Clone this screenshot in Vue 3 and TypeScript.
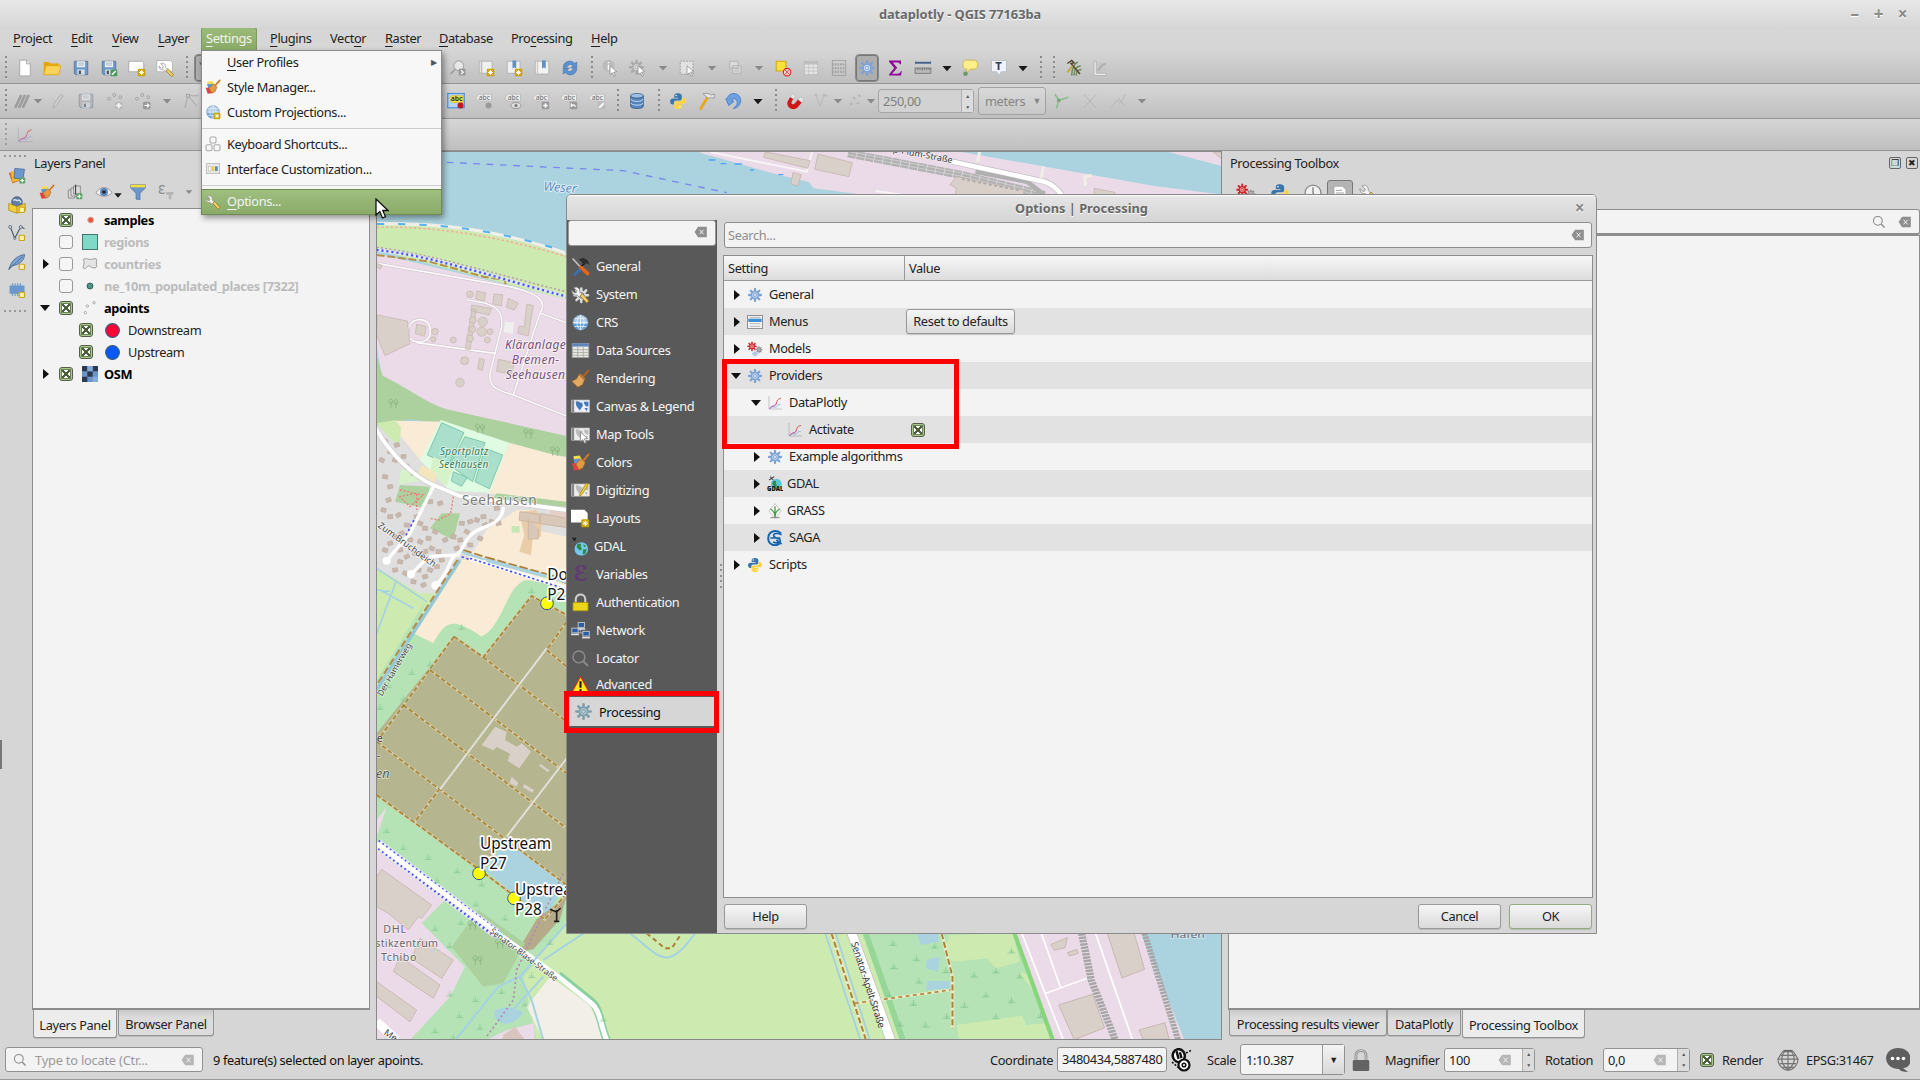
<script setup lang="ts">
interface Tool { k: string; x: number; w?: number }

const gear = (c: string, hole: string, cx = 12, cy = 12, s = 1) =>
  `<g transform="translate(${cx} ${cy}) scale(${s})"><g stroke="${c}" stroke-width="3.4" stroke-linecap="round"><path d="M0-9V9M-9 0H9M-6.4-6.4 6.4 6.4M6.4-6.4-6.4 6.4"/></g><circle r="6.2" fill="${c}"/><circle r="3.6" fill="none" stroke="${hole}" stroke-width="1.2"/><circle r="1.6" fill="${hole}"/></g>`
const star = '<rect x="13" y="13" width="10" height="10" rx="1.5" fill="#c8a000"/><path d="M18 14.5v7M14.6 18h6.8M15.6 15.6l4.8 4.8M20.4 15.6l-4.8 4.8" stroke="#fff" stroke-width="1.2"/>'
const ybox = '<rect x="15" y="15" width="7" height="7" rx="1" fill="#fcf3a8" stroke="#cfa41c" stroke-width="1.6"/>'
const wrench = '<path d="M3.500 3.500l4 3.500-.5 2.500-2.500.5L1 7c0 4 3 6.500 6.500 5.500l3 3 3.500-3.500-3-3C12 5 8 1 3.500 3.500z" fill="#f4f4f4" stroke="#8d8d8d"/><path d="M11.500 14l3-3 8 9-2.500 3z" fill="#f2cf62" stroke="#8a6a22"/>'
const brush = '<path d="M22 2l-7 8" stroke="#b3621c" stroke-width="2.600" stroke-linecap="round"/><path d="M10 7l7 7-2.500 6-6 3L1 15.500l6-3z" fill="#e3a862" stroke="#9c5f1d" stroke-width=".8"/><path d="M10 7l7 7 1-2-6-6z" fill="#c47b2a"/>'
const cbrush = '<path d="M3 4l8-1 3 6-9 5z" fill="#f8dc48"/><path d="M3 8l8-1 1 4-7 3z" fill="#5e93d4"/><path d="M1 13l6 0 6 8-9 1z" fill="#e04141"/><path d="M22 2l-6 7" stroke="#d07a25" stroke-width="2.600" stroke-linecap="round"/><path d="M13 7l5 5-3 7-5 2-4-7z" fill="#e29a44" stroke="#a65e18" stroke-width=".8"/>'
const py = (() => {
  const p = 'M12 1.500c-4 0-5 1.500-5 3.500v2.500h5.500v1H5C3 8.500 1.500 10 1.500 12.500S3 16.500 5 16.500h1.500v-2.300c0-2 1-3 3-3h5c1.500 0 2.500-1 2.500-2.400V5c0-2.300-2-3.500-5-3.500z'
  return `<path d="${p}" fill="#3a75ab"/><path d="${p}" fill="#ffd344" transform="rotate(180 12 12)"/><circle cx="9.500" cy="4.500" r="1" fill="#fff"/><circle cx="14.500" cy="19.500" r="1" fill="#fff"/>`
})()
const globe = '<circle cx="12" cy="12" r="9.500" fill="#a9c8e6" stroke="#6d8db0"/><path d="M3 14h18c-1 5-5 7.500-9 7.500S4 19 3 14z" fill="#5f9bd8"/><path d="M12 2.500v19M2.500 12h19M4.500 7h15M4.500 17h15M12 2.500c-6 5-6 14 0 19M12 2.500c6 5 6 14 0 19" fill="none" stroke="#eef5fb" stroke-width="1"/>'
const floppy = (c: string) => `<path d="M3 3h18v18H5l-2-2z" fill="${c}" stroke="#55708f"/><rect x="6.500" y="3" width="11" height="8" fill="#e8eef5"/><path d="M8 5.500h8M8 8h8" stroke="#9aa"/><rect x="7" y="14" width="10" height="7" fill="#d5dde6"/><rect x="9" y="15.500" width="3" height="4.500" fill="#555"/>`
const plot = '<path d="M3 2v19h19" fill="none" stroke="#8b8b9c" stroke-width="1" stroke-dasharray="2 1"/><path d="M4 20c4-6 8-1 10-7 1-5 2-7 7-8" fill="none" stroke="#d9534f" stroke-width="1.400"/><path d="M4 21c4-7 7-2 10-9" fill="none" stroke="#b75fd0" stroke-width="1.300"/><path d="M5 20c5-5 8 1 10-3s4-2 6-3" fill="none" stroke="#86a8e8" stroke-width="1.200"/>'
const tag = (b: string) => `<path d="M1 8l4-5h17v9H5z" fill="#ececec" stroke="#b5b5b5"/><text x="5" y="10.500" font-size="9" font-family="Noto Sans" fill="#666">abc</text>${b}`
const map = (o: string, w = '#eee', l = '#bbb') => `<rect x="1" y="4" width="22" height="15" fill="${w}" stroke="#ddd"/><rect x="1" y="4" width="3" height="15" fill="#888"/><path d="M6 6c4-2 5 2 8 1l1 4-4 6c-2-4-5-4-5-11zM16 6l6 0v5c-3 3-5-1-6-5zM17 14l4 0-1 4z" fill="${l}"/>${o}`
const cursor = '<path d="M12 9l9 8-4.200.5 2.500 4.500-2 1-2.300-4.600L12 21z" fill="#fff" stroke="#888"/>'
const pc = (x: number, y: number) => `<rect x="${x}" y="${y}" width="8" height="6" fill="#2a5fa8" stroke="#d5d5d5"/><path d="M${x - 1} ${y + 8}h10" stroke="#ddd" stroke-width="2"/>`
const nodes = '<g fill="none" stroke="#999"><circle cx="4" cy="9" r="2"/><circle cx="11" cy="4" r="2"/><circle cx="19" cy="7" r="2"/></g>'

const icons: Record<string, string> = {
  new: '<path d="M5 1.500h9l5 5v16H5z" fill="#fff" stroke="#999"/><path d="M14 1.500v5h5" fill="#eee" stroke="#999"/>',
  open: '<path d="M1 4h7l2 2h11v15H1z" fill="#e8a60c"/><path d="M4 9h20l-3 12H1z" fill="#fbd35a" stroke="#e0a010"/>',
  save: floppy('#6d97c8'),
  saveas: floppy('#6d97c8') + '<rect x="14" y="14" width="9" height="9" rx="1.500" fill="#4e9a5c"/><path d="M16 21l5-5" stroke="#fff" stroke-width="2"/>',
  layout: '<path d="M1 3h18l2 2v12H1z" fill="#fff" stroke="#999"/>' + star,
  laymgr: '<path d="M1 2h18l3 3v12H1z" fill="#fff" stroke="#aaa"/>' + `<g transform="translate(3 3) scale(.9)">${wrench}</g>`,
  zoomlast: '<circle cx="13" cy="9" r="6.500" fill="#e8e8e8" stroke="#aaa" stroke-width="1.500"/><path d="M8 14l-6 6" stroke="#999" stroke-width="2"/><rect x="13" y="13" width="9" height="9" fill="#999"/><path d="M16 15l3 2.500-3 2.500" stroke="#fff" stroke-width="1.600" fill="none"/>',
  bm1: '<path d="M3 3h17v16H3z" fill="#f0f0f0" stroke="#aaa"/><path d="M6 3v16" stroke="#bbb" stroke-width="2"/>' + star,
  bm2: '<path d="M3 3h17v16H3z" fill="#f0f0f0" stroke="#aaa"/><path d="M10 2h5v11l-2.500-2-2.500 2z" fill="#5f8fc6"/>' + star,
  bm3: '<path d="M3 3h18v17H3z" fill="#f3f3f3" stroke="#aaa"/><path d="M6 3v17" stroke="#ccc" stroke-width="2"/><path d="M12 2h5v11l-2.500-2-2.500 2z" fill="#5f8fc6"/>',
  refresh: '<path d="M3 11c0-8 11-11 15-5l3-2v8h-8l3-3c-3-3-7-2-8 2z" fill="#5b92cf" stroke="#376ea8" stroke-width=".7"/><path d="M21 13c0 8-11 11-15 5l-3 2v-8h8l-3 3c3 3 7 2 8-2z" fill="#5b92cf" stroke="#376ea8" stroke-width=".7"/>',
  ident: '<circle cx="10" cy="9" r="8" fill="#bbb"/><path d="M10 4v1.500M10 7.500v7" stroke="#fff" stroke-width="2"/>' + cursor,
  act: gear('#aaa', '#eee', 10, 11, .95) + cursor,
  down: '<path d="M7 9.500h10L12 15z" fill="#8a8a8a"/>',
  downb: '<path d="M6.500 9.500h11L12 16z" fill="#1a1a1a"/>',
  sel: '<rect x="3" y="3" width="17" height="17" fill="#e2e2e2" stroke="#999" stroke-dasharray="2 2" stroke-width="1.500"/>' + cursor,
  selby: '<path d="M5 3h11v9H5zM9 9h11v10H9z" fill="#dcdcdc" stroke="#aaa"/><path d="M11 13h7M11 16h7" stroke="#aaa"/>',
  desel: '<path d="M3 3h13v13H3z" fill="#fbdf3c" stroke="#d0aa10" stroke-width="1.500"/><circle cx="17.500" cy="17.500" r="5" fill="#f6d0d0" stroke="#d22" stroke-width="1.400"/><path d="M14 14l7 7M21 14l-7 7" stroke="#d22"/>',
  table: '<rect x="3" y="3" width="18" height="18" fill="#e5e5e5" stroke="#b5b5b5"/><path d="M3 7h18M9 7v14M15 7v14M3 11.500h18M3 16h18" stroke="#bdbdbd"/><path d="M3 5h18" stroke="#bbb" stroke-width="3"/>',
  abacus: '<rect x="3" y="2" width="18" height="20" fill="none" stroke="#999"/><path d="M3 7h18M3 12h18M3 17h18" stroke="#a2a2a2" stroke-width="3" stroke-dasharray="2 1.500"/>',
  gear: gear('#7ba3d6', '#dce8f5'),
  gearg: gear('#7e9fae', '#c8d4da'),
  sigma: '<path d="M4 2h16v5h-1.500c-.5-2-1.500-2.500-4-2.500H9l6 7-7 8h7c3 0 4-1 5-3.500h1L20 22H4v-1.500l7-8.500-7-8.500z" fill="#92069a"/>',
  ruler: '<path d="M2 5h20" stroke="#3d618a" stroke-width="2.500"/><path d="M2 3v4M22 3v4" stroke="#3d618a"/><rect x="1.500" y="12" width="21" height="7" fill="#bbb" stroke="#666"/><path d="M5 12v3M8 12v3M11 12v4M14 12v3M17 12v3M20 12v3" stroke="#666"/>',
  tip: '<path d="M6 1.500h12q4.500 1 4.500 6t-4.500 6h-6l-5 6 1-6H6q-3.500-1-3.500-6t3.500-6z" fill="#fdf08a" stroke="#c8a940"/><circle cx="6" cy="19.500" r="3" fill="#6b9a6b"/>',
  annot: '<path d="M2 2h20v15h-7l-3 5-3-5H2z" fill="#edf3f8" stroke="#b0b8c0"/><text x="7" y="15" font-size="15" font-weight="700" font-family="Noto Sans" fill="#333f50">T</text>',
  grass1: '<path d="M9 22c0-10 2-15 8-18M12 22c0-8 3-12 9-13M15 22c0-5 3-8 7-8" fill="none" stroke="#6c8d55" stroke-width="2"/><path d="M3 6l6-4 3 3-4 1 12 14" fill="none" stroke="#594632" stroke-width="2"/><path d="M3 18l7-9" stroke="#c9a53a" stroke-width="2.500"/>',
  grass2: '<path d="M4 3h3v16h13v3H4z" fill="#eee" stroke="#aaa"/><path d="M9 5h11v12H9z" fill="#c6c6c6"/><path d="M10 16c2-6 5-9 10-10" stroke="#aaa" fill="none" stroke-width="2"/>',
  edits: '<g stroke="#9c9c9c" stroke-width="3.500"><path d="M3 21L11 4"/><path d="M8 21l8-17"/><path d="M13 21l8-17"/></g>',
  pencil: '<path d="M5 21l2-6 9-12 3 2-9 13z" fill="#ccc" stroke="#aaa"/>',
  saveg: '<g opacity=".6">' + floppy('#aaa') + '</g>',
  addpt: nodes + '<rect x="12" y="13" width="10" height="10" rx="2" fill="#bbb"/><path d="M17 14.500v7M13.500 18h7" stroke="#fff" stroke-width="1.800"/>',
  movept: nodes + '<rect x="12" y="13" width="10" height="10" rx="2" fill="#999"/><path d="M14 18h6M17.500 15.500l2.500 2.500-2.500 2.500" stroke="#fff" stroke-width="1.500" fill="none"/>',
  vertex: '<path d="M4 21L8 5h14M8 5l12 14" stroke="#aaa" fill="none" stroke-width="1.500"/><rect x="6" y="3" width="4" height="4" fill="#ccc" stroke="#999"/>',
  lab1: '<rect x="1" y="2" width="22" height="19" fill="#b9d4f2" stroke="#4c8fdc" stroke-width="1.600"/><path d="M3 8l3-3h15v9H6z" fill="#fce54c" stroke="#d5b820"/><text x="5" y="12.500" font-size="9" font-weight="700" font-family="Noto Sans" fill="#333">abc</text><circle cx="18" cy="18" r="4" fill="#c3171c"/>',
  lab2: tag('<circle cx="18" cy="18" r="4" fill="#999"/>'),
  lab3: tag('<ellipse cx="16" cy="18" rx="6.500" ry="4" fill="#ddd" stroke="#888"/><circle cx="16" cy="18" r="2" fill="#777"/>'),
  lab4: tag('<rect x="13" y="13" width="10" height="10" rx="1.500" fill="#999"/><path d="M18 15v6M15 18h6" stroke="#fff" stroke-width="2"/>'),
  lab5: tag('<rect x="13" y="13" width="10" height="10" rx="1.500" fill="#999"/><path d="M15 20c0-4 6-4 5 0M15 15v3h3" stroke="#fff" stroke-width="1.500" fill="none"/>'),
  lab6: tag('<rect x="13" y="13" width="10" height="10" rx="1.500" fill="#bbb"/><path d="M15 21l6-6" stroke="#fff" stroke-width="2.400"/>'),
  db: '<path d="M3.500 5v14c0 4 17 4 17 0V5" fill="#5484bb" stroke="#34597f"/><ellipse cx="12" cy="5" rx="8.500" ry="3" fill="#9fc1e6" stroke="#34597f"/><path d="M4 9.500c0 4 16 4 16 0M4 14.500c0 4 16 4 16 0" fill="none" stroke="#c4dbf2" stroke-width="1.300"/>',
  python: py,
  hammer: '<path d="M5 22L14 7" stroke="#e8a713" stroke-width="3.500" stroke-linecap="round"/><path d="M8 2.500c5-2 9 0 11 1.500l4-1.500v6l-4-1-4 1-3-3z" fill="#e6e6e6" stroke="#888"/>',
  undo: '<path d="M3 9c1-9 17-10 18 2 0 6-5 11-10 11 4-3 6-6 5-9.500C15 8 10 8 9 11l3 1.500L5 18 1 9z" fill="#6d9fe2" stroke="#3d75c0"/>',
  magnet: '<path d="M5.500 6.500L2 13c-2 9 9 13 14 7l5-6-5-4-4 5c-3 3-6 1-4-3l2-3z" fill="#d21515"/><path d="M5.500 6.500L8 2l5 3-3 4.500zM16 10l3.500-4 4.500 4.500-3 3.500z" fill="#e4e4e4" stroke="#999" stroke-width=".5"/>',
  snapv: '<path d="M4 4l5 15 6-15M15 5h6" fill="none" stroke="#bbb" stroke-width="1.500"/><circle cx="4" cy="4" r="2" fill="#bbb"/><circle cx="15" cy="4" r="2" fill="#bbb"/>',
  pt4: '<g fill="#b4b4b4"><circle cx="7" cy="16" r="1.700"/><circle cx="11" cy="8" r="1.700"/><circle cx="18" cy="5" r="1.700"/><circle cx="16" cy="15" r="1.700"/></g>',
  topo: '<path d="M4 3l5 8 13-4M9 11l-3 11" stroke="#89bd89" stroke-width="2" fill="none"/><circle cx="9" cy="11" r="2.500" fill="#79a879"/>',
  cross: '<path d="M4 3l16 18M20 3L4 21" stroke="#b6b6b6" stroke-width="1.300"/>',
  trace: '<path d="M3 21L11 11l4 4 7-12M12 8l9 11" stroke="#b6b6b6" stroke-width="1.300" fill="none"/>',
  plot,
  style: cbrush,
  proj: globe + star,
  keys: '<g fill="#f6f6f6" stroke="#aaa" stroke-width="1.600"><rect x="7.500" y="1.500" width="9" height="9" rx="2"/><rect x="1.500" y="13" width="9" height="9" rx="2"/><rect x="13.500" y="13" width="9" height="9" rx="2"/></g>',
  iface: '<rect x="2" y="4" width="20" height="15" fill="#e8e8e8" stroke="#aaa"/><rect x="5" y="8" width="4" height="7" fill="#fff" stroke="#bbb"/><rect x="10" y="8" width="4" height="7" fill="#f0cc3c"/><rect x="15" y="8" width="4" height="7" fill="#5b87c5"/>',
  wrench,
  dsm: '<path d="M1 8l9-3 6 13-10 4z" fill="#d9722c"/><path d="M4 6l10-2 3 13-11 3z" fill="#ecc030"/><path d="M9 2l13 1-2 13-12-1z" fill="#6a98cc" stroke="#44688f"/><rect x="15" y="14" width="8" height="8" rx="1.500" fill="#5da267"/><path d="M19 15.500v5M16.500 18h5" stroke="#fff" stroke-width="1.500"/>',
  pkg: '<circle cx="12" cy="8" r="7" fill="#5f7da5" stroke="#334a68"/><path d="M7 6c3-3 4 1 6 0s4 0 4 3" stroke="#d5e1ef" stroke-width="2" fill="none"/><path d="M1 10l11 4 11-4v9l-11 4-11-4z" fill="#f3cf3c" stroke="#a88718"/><path d="M12 14v9" stroke="#a88718"/>' + ybox,
  vec: '<path d="M3 4l6 15L17 4l5 2" fill="none" stroke="#44546a" stroke-width="1.400"/><g fill="#ddd" stroke="#44546a"><circle cx="3" cy="4" r="2"/><circle cx="9" cy="19" r="1.500"/><circle cx="17" cy="4" r="2"/></g>' + ybox,
  feather: '<path d="M1 22C4 12 10 4 22 2c0 8-7 14-17 15z" fill="#7ea6d4" stroke="#3b5b80"/><path d="M1 22L19 5" stroke="#3b5b80"/>' + ybox,
  mem: '<rect x="2" y="6" width="20" height="11" rx="1" fill="#6a98cc"/><path d="M6 3v17M9.500 3v17M13 3v17M16.500 3v17" stroke="#6a98cc" stroke-width="1.500"/>' + ybox,
  addgrp: '<g fill="#ddd" stroke="#666"><path d="M2 9h10v12H2z"/><path d="M6 6h10v12H6z"/><path d="M10 3h10v12H10z"/></g><path d="M13 1v15" stroke="#333" stroke-width="1.500"/><rect x="14" y="14" width="9" height="9" rx="1.500" fill="#5da267"/><path d="M18.500 15.500v6M15.500 18.500h6" stroke="#fff" stroke-width="1.500"/>',
  eye: '<path d="M0 13C6 3 18 3 24 13 18 20 6 20 0 13z" fill="#f4f4f4" stroke="#888" stroke-width="1.300"/><circle cx="12" cy="12" r="6" fill="#5a86bb"/><circle cx="12" cy="12" r="2.600" fill="#223"/>',
  funnel: '<path d="M1 1h22v5l-8 8v10l-6-1.500V14L1 6z" fill="#6a98cc" stroke="#45709f"/><path d="M1 1h22v4H1z" fill="#f7dc3e"/>',
  epsf: '<text x="0" y="15" font-size="23" font-family="Noto Sans" fill="#8e8e8e">ε</text><path d="M12 12h11v4h-3v7h-4v-7h-4z" fill="#b5b5b5"/>',
  tools: '<path d="M2 2l11 12" stroke="#c5c5c5" stroke-width="2"/><path d="M15 12L5 22" stroke="#3c6fb5" stroke-width="3.600" stroke-linecap="round"/><path d="M17 8l-5 5" stroke="#222" stroke-width="2.500"/><path d="M10 3l5-2 6 3 3 6-4-2-4 2-3-4z" fill="#2e2e2e"/><path d="M12.500 13l8.500 8" stroke="#e8641b" stroke-width="4.500" stroke-linecap="round"/>',
  system: gear('#dcdcdc', '#777', 13, 13, .95) + wrench,
  globe,
  data: '<rect x="1.500" y="3" width="21" height="18" fill="#e9e9e5" stroke="#999"/><path d="M1.500 5h21" stroke="#5e86b8" stroke-width="4"/><path d="M1.500 11h21M1.500 14.500h21M1.500 18h21M8.500 7v14M15.500 7v14" stroke="#a5a59d"/>',
  brush,
  canvas: map('', '#eef', '#4377b5'),
  maptools: map(cursor),
  colors: cbrush,
  digit: map('<path d="M11 17l8-14 3 1-8 13-3 2z" fill="#f5d327" stroke="#a88a10"/>'),
  layouts: '<path d="M0 1h17l4 4v12H0z" fill="#fff"/>' + star,
  gdalg: '<circle cx="13" cy="15" r="8.500" fill="#73c8ee"/><path d="M8 9c4-2 6 0 4 3l2 3-3 2-4-4zM15 16l5-1-2 6-3 1zM15 9l4 2-2 2z" fill="#2e8b3d"/><path d="M2 1l3 3M6 1l-2 4" stroke="#111" stroke-width="1.500"/>',
  eps: '<text x="4" y="20" font-size="27" font-weight="700" font-family="Noto Serif, Liberation Serif" fill="#603a72">Ɛ</text>',
  lock: '<path d="M6 12V8c0-8 12-8 12 0v4" fill="none" stroke="#cfcfcf" stroke-width="2.600"/><rect x="2.500" y="12" width="19" height="10.500" rx="1" fill="#ecd51a" stroke="#a89410"/>',
  net: '<path d="M12 9v4M5 15h12" stroke="#ccc"/>' + pc(9, 2) + pc(1, 9) + pc(15, 13),
  mag: '<circle cx="10" cy="10" r="7.500" fill="none" stroke="#8b8b8b" stroke-width="1.800"/><path d="M15.500 15.500l6 6" stroke="#8b8b8b" stroke-width="2.400"/>',
  warn: '<path d="M12 2l11 20H1z" fill="#ffe716" stroke="#d8261c" stroke-width="1.300"/><path d="M12 8v8M12 18v2.500" stroke="#111" stroke-width="2.600"/>',
  menus: '<rect x="1" y="2" width="22" height="20" fill="#f4f4f4" stroke="#666"/><path d="M2 9.500h20" stroke="#3f8fd6" stroke-width="5"/><path d="M4 5h16M4 14.500h16M4 18.500h16" stroke="#999"/>',
  models: gear('#cf2127', '#f3d0d0', 7.500, 8, .68) + gear('#888', '#ddd', 18, 13, .5) + gear('#9dbde6', '#dde', 12, 19, .42),
  gdal: '<circle cx="14" cy="12" r="8" fill="#5fc3dc"/><path d="M9 8c4-2 6 0 4 3l2 3-3 2-4-4z" fill="#2e8b3d"/><path d="M3 6l8-5M5 1l4 5" stroke="#444" stroke-width="1.600"/><text x="0" y="22" font-size="9" font-weight="900" font-family="Noto Sans" fill="#111">GDAL</text>',
  grass: '<path d="M12 1l9 11-9 11-9-11z" fill="#fdfdfd" stroke="#999" stroke-width=".8"/><path d="M12 21c0-7-3-10-7-12M12 21V5M12 21c0-7 3-10 7-12" fill="none" stroke="#45a045" stroke-width="2"/><path d="M5 22h14" stroke="#555"/>',
  saga: '<path d="M21 5C15-1 3 1 2 11s9 15 17 9" fill="none" stroke="#1464ae" stroke-width="3"/><path d="M22 7c-6-3-13-2-12 2s10 3 10 7-7 4-11 2M5 12h15M14 15l8 6" fill="none" stroke="#1464ae" stroke-width="2.400"/>',
  clock: '<circle cx="12" cy="12" r="9.500" fill="#f1f1f1" stroke="#888" stroke-width="1.500"/><path d="M12 5v7l3 5" fill="none" stroke="#777" stroke-width="1.500"/>',
  page: '<path d="M3 2h13l5 5v15H3z" fill="#fcfcfc" stroke="#999"/><path d="M6 8h9M6 12h12M6 16h12M6 20h12" stroke="#999" stroke-width="1.300"/>',
  clear: '<path d="M7 3h15v18H7L1 12z" fill="#8e8e8e"/><path d="M9.500 8l7 8M16.500 8l-7 8" stroke="#f3f3f3" stroke-width="1.700"/>',
  poly: '<path d="M2 5c4-3 8 1 12 0s8-2 8 1-1 6 0 9-6 4-9 1-5 0-7 2-5 1-4-3 2-6 0-10z" fill="#e4e4e4" stroke="#8a8a8a" stroke-width="1.200"/>',
  pts: '<g fill="#fff" stroke="#888"><circle cx="5" cy="19" r="1.800"/><circle cx="8" cy="9" r="1.800"/><circle cx="18" cy="4" r="1.800"/></g>',
  osm: '<rect width="24" height="24" fill="#6b95c8"/><path d="M0 0h8v8H0zM16 0h8v8h-8zM8 8h8v8H8zM0 16h8v8H0z" fill="#2c3a4f"/><path d="M8 0h8v8H8zM16 16h8v8h-8z" fill="#86abd8"/>',
  sq: '<rect x=".7" y=".7" width="22.600" height="22.600" fill="#80d8c6" stroke="#3d6e64" stroke-width="1.400"/>',
  sdot: '<circle cx="13" cy="12" r="4.500" fill="#e3573a" stroke="#d9b8b0" stroke-width="1.500"/>',
  gdot: '<circle cx="12" cy="12" r="4.500" fill="#4b9686" stroke="#2c5850" stroke-width="1.300"/>',
  red: '<circle cx="12" cy="12" r="11" fill="#ff0436" stroke="#33587c" stroke-width="1.700"/>',
  blue: '<circle cx="12" cy="12" r="11" fill="#0a59f7" stroke="#33587c" stroke-width="1.700"/>',
  mouse: '<g transform="rotate(-15 12 12)"><ellipse cx="10" cy="7" rx="6" ry="6.500" fill="#fff" stroke="#111" stroke-width="2.500"/><path d="M9 2v8M12 4v6" stroke="#111" stroke-width="2.400"/></g><circle cx="14" cy="17" r="5.500" fill="#fff" stroke="#111" stroke-width="2.200"/><circle cx="14" cy="17" r="1.800" fill="none" stroke="#111" stroke-width="1.500"/><path d="M16 5l6-3M2 14l8 7" stroke="#111" stroke-dasharray="2 1.500" stroke-width="1.500"/>',
  lockg: '<path d="M6.500 12V7c0-7 11-7 11 0v5" fill="none" stroke="#8a8a8a" stroke-width="3"/><path d="M6.500 12V7c0-7 11-7 11 0v5" fill="none" stroke="#ddd" stroke-width="1"/><rect x="3" y="12" width="18" height="12" rx="1.500" fill="#636363"/>',
  wire: '<g fill="none" stroke="#747474" stroke-width="1.300"><path d="M6 3h12l5 8c0 6-5 12-11 12S1 17 1 11z"/><path d="M1 11h22M3 16h18M4 7h16M12 2v21M8 3c-5 7-3 14 4 20M16 3c5 7 3 14-4 20M6 20h12"/></g><path d="M7 2h10" stroke="#666" stroke-width="2"/>',
  bubble: '<path d="M12 0c16 0 16 20 5 20l5 4c-5 0-8-1-9-3C-4 21-4 0 12 0z" fill="#5e5e5e"/><g fill="#fff"><circle cx="6.500" cy="10.500" r="1.800"/><circle cx="12" cy="10.500" r="1.800"/><circle cx="17.500" cy="10.500" r="1.800"/></g>',
  pan: '<path d="M3 4l8 16 9-9z" fill="#555"/>',
  handle: '<path d="M12 0v24" stroke="#8b8b8b" stroke-width="2" stroke-dasharray="2 3"/>',
}

/* Turns icon centres into flow offsets between neighbours. */
const place = (list: Tool[]) => {
  let end = 0
  return list.map(t => {
    const w = t.w ?? 24
    const gap = t.x - w / 2 - end
    end = t.x + w / 2
    return { ...t, w, gap }
  })
}
const t = (s: string): Tool[] => s.split(' ').map(p => {
  const [k, x] = p.split('@')
  return { k, x: +x, w: k === 'handle' || k.startsWith('down') ? 10 : k === 'spin' ? 96 : k === 'unit' ? 68 : 22 }
})
const row1 = place(t('handle@6 new@25 open@52 save@81 saveas@109 layout@137 laymgr@165 handle@187 pan@206 zoomlast@458 bm1@486 bm2@514 bm3@542 refresh@570 handle@592 ident@610 act@638 down@663 sel@687 down@712 selby@735 down@759 desel@783 table@811 abacus@839 gear@867 sigma@895 ruler@923 downb@947 tip@970 annot@999 downb@1023 handle@1041 handle@1054 grass1@1074 grass2@1100'))
const row2 = place(t('handle@6 edits@22 down@38 pencil@58 saveg@86 addpt@115 movept@143 down@167 vertex@191 lab1@456 lab2@484 lab3@513 lab4@541 lab5@569 lab6@597 handle@618 db@637 handle@659 python@678 hammer@706 undo@734 downb@758 handle@776 magnet@795 snapv@822 down@838 pt4@855 down@871 spin@926 unit@1012 topo@1061 cross@1090 trace@1118 down@1142'))
const row3 = place(t('handle@6 plot@25'))

const bar = [
  ['', 'P', 'roject', 58], ['', 'E', 'dit', 41], ['', 'V', 'iew', 46], ['', 'L', 'ayer', 44], ['', 'S', 'ettings', 56],
  ['', 'P', 'lugins', 60], ['Vect', 'o', 'r', 55], ['', 'R', 'aster', 54], ['', 'D', 'atabase', 72], ['Pro', 'c', 'essing', 80], ['', 'H', 'elp', 50],
].map(([a, u, b, w], i) => ({ a, u, b, w: w as number, on: i === 4 }))

const menu = [
  { i: '', a: 'U', b: 'ser Profiles', sub: true }, { i: 'style', a: '', b: 'Style Manager...' }, { i: 'proj', a: '', b: 'Custom Projections...' },
  { sep: true }, { i: 'keys', a: '', b: 'Keyboard Shortcuts...' }, { i: 'iface', a: '', b: 'Interface Customization...' },
  { sep: true }, { i: 'wrench', a: 'O', b: 'ptions...', on: true },
] as { i?: string; a?: string; b?: string; sub?: boolean; sep?: boolean; on?: boolean }[]

const layers = [
  { n: 'samples', i: 'sdot', c: true, s: 'b' }, { n: 'regions', i: 'sq', c: false, s: 'g' }, { n: 'countries', i: 'poly', c: false, s: 'g', x: 'r' },
  { n: 'ne_10m_populated_places [7322]', i: 'gdot', c: false, s: 'g' }, { n: 'apoints', i: 'pts', c: true, s: 'b', x: 'd' },
  { n: 'Downstream', i: 'red', c: true, s: 'sub' }, { n: 'Upstream', i: 'blue', c: true, s: 'sub' }, { n: 'OSM', i: 'osm', c: true, s: 'b', x: 'r' },
]
const side = [
  ['tools', 'General'], ['system', 'System'], ['globe', 'CRS'], ['data', 'Data Sources'], ['brush', 'Rendering'], ['canvas', 'Canvas & Legend'],
  ['maptools', 'Map Tools'], ['colors', 'Colors'], ['digit', 'Digitizing'], ['layouts', 'Layouts'], ['gdalg', 'GDAL'], ['eps', 'Variables'],
  ['lock', 'Authentication'], ['net', 'Network'], ['mag', 'Locator'], ['warn', 'Advanced'],
]
const rows = [
  { n: 'General', i: 'gear', l: 0, x: 'r' }, { n: 'Menus', i: 'menus', l: 0, x: 'r', v: 'btn' }, { n: 'Models', i: 'models', l: 0, x: 'r' },
  { n: 'Providers', i: 'gear', l: 0, x: 'd' }, { n: 'DataPlotly', i: 'plot', l: 1, x: 'd' }, { n: 'Activate', i: 'plot', l: 2, x: '', v: 'chk' },
  { n: 'Example algorithms', i: 'gear', l: 1, x: 'r' }, { n: 'GDAL', i: 'gdal', l: 1, x: 'r' }, { n: 'GRASS', i: 'grass', l: 1, x: 'r' },
  { n: 'SAGA', i: 'saga', l: 1, x: 'r' }, { n: 'Scripts', i: 'python', l: 0, x: 'r' },
]

/* Village houses, grass tufts and trees on the map. */
const pairs = (s: string) => s.split(' ').map(p => p.split(',').map(Number))
const houses = pairs('45,905 60,935 80,915 75,960 100,950 110,980 45,1010 60,1040 35,960 130,1000 55,1080 40,1110 60,1130 85,1125 110,1155 140,1130 150,1150 165,1165 95,1180 75,1190 120,1200 150,1205 175,1195 60,1210 45,1230 90,1230 110,1250 135,1240 165,1235 185,1225 205,1235 225,1200 250,1190 270,1200 290,1175 275,1150 300,1145 320,1140 340,1130 345,1155 365,1145 385,1150 330,1195 300,1215 260,1225 90,1265 75,1290 105,1300 145,1290 165,1310 180,1290 200,1280 160,1335 130,1325 215,1260 195,1175 180,1085 210,1090 320,1085 380,1105')
const tufts = pairs('485,90 275,200 125,335 180,310 100,415 55,375 30,440 50,810 100,860 175,890 262,930 200,960 318,1030 405,1072 273,1085 195,1103 238,1155 485,1245 395,1292 316,1317 268,1365 240,1300 330,1400 195,1410 465,1330 250,1430 700,1375 335,970 540,1145')
const tufts2 = pairs('768,130 864,138 822,175 770,200 890,212 955,225 1005,213 1041,153 828,243 982,285 1041,302 815,310 933,316 892,349 1005,350 1108,347 784,372 843,375 760,285 1060,228')
const trees = pairs('70,785 330,860 475,875 555,928')
const trees2 = pairs('308,1090 390,1145 323,1195')
const treeD = (p: number[]) => `M${p[0] - 7} ${p[1]}v20M${p[0] + 8} ${p[1]}v20m0-12a6 7 0 1 0-1 0M${p[0] - 7} ${p[1] + 6}a6 7 0 1 0-1 0`
const tracks = 'M252 230L340 292 485 108 590 165M252 230L20 545M180 330L590 640M340 292L590 485M100 435L590 805M20 545L410 840M210 685L135 785M530 270L590 320M590 185L530 270M20 705L350 945 525 1078 590 1000M410 840L590 975'
const plant = 'M20 370L400 436C520 460 530 490 510 520L490 580 430 765M510 520L590 548M290 480C380 490 400 510 395 560L360 700C355 740 380 750 430 765L590 828M115 580C105 530 190 520 180 580 175 620 110 610 115 580M140 608L375 640'
</script>

<template>
  <div class="win">
    <header class="title"><b>dataplotly - QGIS 77163ba</b><span class="wb"><i>–</i><i>+</i><i>×</i></span></header>
    <nav class="menubar">
      <span v-for="m in bar" :key="m.a + m.u + m.b" :class="{ on: m.on }" :style="{ width: m.w + 'px' }">{{ m.a }}<u>{{ m.u }}</u>{{ m.b }}</span>
    </nav>
    <div class="tb tb1">
      <span v-for="(c, i) in row1" :key="i" class="cell" :class="['c-' + c.k]" :style="{ width: c.w + 'px', marginLeft: c.gap + 'px' }"><svg class="i24" :class="c.k" viewBox="0 0 24 24" v-html="icons[c.k]" /></span>
    </div>
    <div class="tb tb2">
      <span v-for="(c, i) in row2" :key="i" class="cell" :style="{ width: c.w + 'px', marginLeft: c.gap + 'px' }">
        <span v-if="c.k === 'spin'" class="spin dis"><em>250,00</em><span class="ud"><i>▲</i><i>▼</i></span></span>
        <span v-else-if="c.k === 'unit'" class="unit"><em>meters</em><i>▼</i></span>
        <svg v-else class="i24" :class="c.k" viewBox="0 0 24 24" v-html="icons[c.k]" />
      </span>
    </div>
    <div class="tb tb3">
      <span v-for="(c, i) in row3" :key="i" class="cell" :style="{ width: c.w + 'px', marginLeft: c.gap + 'px' }"><svg class="i24 dim" :class="c.k" viewBox="0 0 24 24" v-html="icons[c.k]" /></span>
    </div>

    <main class="main">
      <aside class="strip">
        <span class="dotline" />
        <svg v-for="k in ['dsm', 'pkg', 'vec', 'feather', 'mem']" :key="k" class="i18" viewBox="0 0 24 24" v-html="icons[k]" />
        <span class="dotline" />
        <span class="grip" />
      </aside>
      <section class="layers">
        <h4>Layers Panel</h4>
        <div class="ltools">
          <svg class="i16" viewBox="0 0 24 24" v-html="icons.style" /><svg class="i16" viewBox="0 0 24 24" v-html="icons.addgrp" />
          <svg class="i16 eye" viewBox="0 0 24 24" v-html="icons.eye" /><svg class="da" viewBox="0 0 24 24" v-html="icons.downb" />
          <svg class="i16 fn" viewBox="0 0 24 24" v-html="icons.funnel" /><svg class="i16" viewBox="0 0 24 24" v-html="icons.epsf" /><svg class="da" viewBox="0 0 24 24" v-html="icons.down" />
        </div>
        <div class="ltree">
          <div v-for="l in layers" :key="l.n" class="lr" :class="l.s">
            <i class="tw" :class="l.x" /><span class="ck" :class="{ c: l.c }" />
            <svg class="i16" viewBox="0 0 24 24" v-html="icons[l.i]" /><span class="nm">{{ l.n }}</span>
          </div>
        </div>
        <div class="tabs"><span class="act">Layers Panel</span><span class="bp">Browser Panel</span></div>
      </section>

      <svg class="map" viewBox="376 151 846 889">
        <rect x="376" y="151" width="846" height="889" fill="#aad3df" />
        <rect x="376" y="560" width="846" height="480" fill="#cdebb0" />
        <g transform="translate(370 140) scale(.33333)">
          <path d="M20 252C230 255 380 275 590 345V480L20 330z" fill="#cdebb0" />
          <path d="M20 250C230 250 380 270 590 340" stroke="#f2efe9" stroke-width="10" fill="none" />
          <path d="M20 252C230 250 380 270 590 336" stroke="#57b3f0" stroke-width="6" stroke-dasharray="22 42" fill="none" />
          <path d="M20 262C200 258 380 288 590 350" stroke="#f4aa9c" stroke-width="5" stroke-dasharray="7 7" fill="none" />
          <path d="M20 340L590 478V900L200 810L35 705L20 620z" fill="#ebdbe8" />
          <g fill="none"><path d="M20 322C200 345 400 410 590 455" stroke="#bb9ca5" stroke-width="5" stroke-dasharray="6 7" /><path d="M20 345L180 365 340 410 406 420V440" stroke="#b5904a" stroke-width="6" stroke-dasharray="24 8" /><path d="M20 330C180 345 400 420 590 470" stroke="#dde3f8" stroke-width="10" /><path d="M20 330C180 345 400 420 590 470" stroke="#4650ee" stroke-width="7" stroke-dasharray="6 9" /></g>
          <path :d="plant" fill="none" stroke="#cbbfc9" stroke-width="8" />
          <path :d="plant" fill="none" stroke="#fdfafc" stroke-width="5" />
          <g fill="#d9d0c9" stroke="#c2b2a8" stroke-width="2"><path d="M22 525l90 18 8 68-75 36-25-60zM320 453l27 6-4 24-26-6zM372 462l26 2-4 34-26-6zM415 475l30 15-12 20-24-8zM470 493l20 3-15 92-32-8 5-22 15 2zM305 495l60 10-8 20-54-12zM318 510l-18 120-14-3 20-120zM140 553l28 6-4 30-28-8zM328 655l15 4-6 32-14-4zM385 658l48 10-8 34-45-8zM20 370l16 6-4 10-14-4z" /><circle cx="338" cy="545" r="14" /><circle cx="335" cy="575" r="14" /><circle cx="309" cy="540" r="10" /><circle cx="307" cy="568" r="10" /><circle cx="300" cy="595" r="10" /><circle cx="195" cy="575" r="10" /><circle cx="190" cy="598" r="8" /><circle cx="284" cy="662" r="12" /><circle cx="270" cy="728" r="13" /><circle cx="250" cy="600" r="9" /><circle cx="360" cy="575" r="9" /><circle cx="352" cy="600" r="9" /><circle cx="300" cy="463" r="10" /></g>
          <path d="M405 545l28 3-5 34-27-6z" fill="#f0efef" />
          <path d="M20 650L38 708C110 740 180 800 250 812L590 888V960L420 910 215 850 120 838 20 865z" fill="#add19e" />
          <path d="M20 855L590 950V1360H20z" fill="#e0dfdf" />
          <path d="M75 842L230 845 150 960 85 880z" fill="#faebd7" /><path d="M20 850l55-10 18 22-5 60-30-30z" fill="#cdebb0" />
          <path d="M418 908L590 955V1090L355 1060z" fill="#faebd7" />
          <path d="M380 1060l210 25v25l-230-22z" fill="#aed29f" /><path d="M540 1100h50v50h-50z" fill="#e5cfc7" />
          <path d="M212 840L418 908 358 1058 240 1052 150 960z" fill="#dffce2" />
          <path d="M215 848L282 878 235 975 172 945zM285 890L345 908 308 1025 238 975zM345 925L398 945 358 1046 315 1025zM250 995l42 18-18 26-30-16z" fill="#a9dfcb" stroke="#7cc7ac" stroke-width="3" />
          <path d="M95 985l55 15 0 22-65 12zM190 950l60 28-20 60-50-40z" fill="#d6f2c8" /><path d="M155 975l45 25-5 30-50-30z" fill="#f3e6bd" />
          <path d="M90 1035l90 5-15 65-90-20zM215 1120l55 0-20 80-70-35z" fill="#aed29f" />
          <path d="M90 1050l70 15-40 35-30-30 50-10 0 50M250 1070l-8 50-35 20-30-5" fill="none" stroke="#ee7a78" stroke-width="4" stroke-dasharray="6 5" />
          <path d="M440 1110l60 0 0 60 90 20v170H200l120-140 30-50z" fill="#faebd7" />
          <path d="M448 1115l50-5 20 20-5 40 0 20-25 5-5 50-35-10 15-50z" fill="#e9cda9" />
          <path d="M450 1115l60 8-3 26-60-8zM512 1120l78 15v28l-80-12zM475 1135v62h30v-30" fill="#d9c8b8" stroke="#c5ae9b" stroke-width="2" /><path d="M425 1158h24v20h-24z" fill="#c7e8b5" />
          <path d="M20 1290C60 1300 110 1340 150 1360H20z" fill="#cdebb0" />
          <rect v-for="(h, i) in houses" :key="i" :x="h[0] - 7" :y="h[1] - 6" width="15" height="12" fill="#c9b8ac" stroke="#b8a396" stroke-width="1.500" :transform="`rotate(${(i * 37) % 60 - 30} ${h[0]} ${h[1]})`" />
          <path d="M20 870C60 940 130 1010 190 1035L270 1068 590 1110" fill="none" stroke="#c9c9c9" stroke-width="15" />
          <g fill="none" stroke="#fff" stroke-linecap="round"><path d="M20 870C60 940 130 1010 190 1035L270 1068 590 1110" stroke-width="12" /><path d="M190 1040L120 1180 50 1262M400 1105C390 1170 320 1150 290 1200L265 1245 175 1250 125 1302M265 1240C230 1260 250 1280 195 1340" stroke-width="10" /></g>
          <g fill="#fff"><circle cx="50" cy="1262" r="12" /><circle cx="123" cy="1302" r="12" /><circle cx="197" cy="1336" r="13" /></g>
          <path d="M275 1235L590 1345" stroke="#aad3df" stroke-width="8" /><path d="M280 1230L590 1330" stroke="#ae7e32" stroke-width="5" stroke-dasharray="26 8" />
          <path d="M132 1140l-26 50M275 1250l110 40 205 65" stroke="#4650ee" stroke-width="5" stroke-dasharray="7 8" fill="none" />
          <path d="M230 67L760 92 1070 158" stroke="#7b86f0" stroke-width="4" stroke-dasharray="20 20" fill="none" />
          <g font-family="Noto Sans" font-style="italic" paint-order="stroke" stroke="#ffffffb0" stroke-width="5">
            <g fill="#77517a" font-size="36"><text x="405" y="628" textLength="182">Kläranlage</text><text x="425" y="673" textLength="142">Bremen-</text><text x="407" y="718" textLength="178">Seehausen</text></g>
            <g fill="#2f7d55" font-size="30"><text x="210" y="944" textLength="145">Sportplatz</text><text x="207" y="983" textLength="148">Seehausen</text></g>
            <text x="520" y="152" font-size="38" fill="#5990c5" textLength="100" transform="rotate(4 522 152)">Weser</text>
            <text x="276" y="1094" font-size="41" font-style="normal" fill="#7b7b7b" textLength="224">Seehausen</text>
            <text x="22" y="1160" font-size="27" font-style="normal" fill="#444" transform="rotate(36 22 1160)">Zum Bruchdeich</text>
          </g>
          <g fill="none" stroke="#7fae77" stroke-width="2"><path v-for="(p, i) in trees" :key="i" :d="treeD(p)" /></g>
        </g>
        <g transform="translate(370 560) scale(.33333)">
          <path d="M20 30l145 95L20 360z" fill="#cdebb0" /><path d="M20 25L170 125M30 90L130 145M80 60l-60 160M60 95L20 90" stroke="#a5d2e3" stroke-width="5" fill="none" />
          <path d="M265 0H590V60L460 70 360 215 330 230 255 190 190 250 130 220z" fill="#faebd7" />
          <path d="M20 360L165 125 130 220 190 250C230 170 260 180 335 230 400 200 410 70 470 60L590 80V1080L540 1160 460 1250 500 1440H20z" fill="#b5e3b5" />
          <path d="M300 -5L590 85" stroke="#fff" stroke-width="12" /><path d="M350 0L590 65" stroke="#aad3df" stroke-width="12" />
          <path d="M300 -5L590 88" stroke="#4650ee" stroke-width="5" stroke-dasharray="7 7" /><path d="M350 -8L450 20 590 58" stroke="#ae7e32" stroke-width="5" stroke-dasharray="26 8" fill="none" />
          <path d="M270 0L20 390" stroke="#94c8d9" stroke-width="10" /><path d="M262 0L20 375" stroke="#b58d48" stroke-width="6" stroke-dasharray="22 10" />
          <path d="M252 230L340 292 485 108 590 165V975L410 840 330 935 20 705V520z" fill="#b5b58f" />
          <path d="M20 780L50 740 20 830zM20 860L225 1020 155 1090 285 1220 240 1310 120 1440H20z" fill="#ebdbe8" />
          <path d="M410 840L585 970 525 1078 345 930z" fill="#aad3df" />
          <path d="M500 1078l90-70-20 70-80 90-50 10z" fill="#b5ab8a" />
          <path :d="tracks" fill="none" stroke="#d3cca8" stroke-width="8" />
          <path :d="tracks" fill="none" stroke="#a98435" stroke-width="5" stroke-dasharray="14 7" />
          <path d="M530 265L210 688M590 595L410 830" stroke="#e0dfd9" stroke-width="6" />
          <path d="M375 500l35 15-5 25 35 20 15-10 28 25-35 50-35-22 7-22-40-20-10 10-35-15zM425 650l20 18-5 12-22-12zM462 672l30 18-5 8-28-16zM512 612l28 20-8 4-26-20z" fill="#d9d0c9" />
          <g fill="#d9d0c9" stroke="#c0aea4" stroke-width="2"><path d="M35 928L185 1035 155 1075 145 1070 115 1110 55 1060 20 1040V950zM150 1135l100 65-35 55-90-60zM90 1190l120 85-20 40L70 1235zM20 1265l120 85-20 35L20 1310z" /></g>
          <path d="M325 1050L465 1150 400 1270 340 1280 245 1160z" fill="#acd19e" />
          <path d="M500 1195L590 1090V1130 L760 1120H2400V1440H710L665 1330z" fill="#cdebb0" />
          <path d="M540 1250L660 1335 705 1440H520L470 1340z" fill="#f1efe8" />
          <path d="M565 1245L665 1325C690 1345 690 1390 710 1440" stroke="#88d0a0" stroke-width="24" fill="none" />
          <path d="M20 850L380 1122" stroke="#e8eafa" stroke-width="30" fill="none" /><path d="M20 850L380 1122" stroke="#4650ee" stroke-width="26" stroke-dasharray="5 9" fill="none" /><path d="M20 850L380 1118 565 1250 665 1330C690 1350 690 1390 710 1440" stroke="#fff" stroke-width="15" fill="none" />
          <g stroke="#a5d2e3" stroke-width="6" fill="none"><path d="M260 1435L385 1280 450 1250 590 1090M450 1250L485 1320 520 1440M520 1200L640 1120M780 1120C870 1190 890 1240 975 1120M410 1370l110-120" /></g>
          <path d="M375 1350q40-20 85 8-20 30-55 34-40-10-30-42z" fill="#aad3df" />
          <path d="M830 1120l55 45h20l30-45" fill="none" stroke="#ae7e32" stroke-width="6" stroke-dasharray="14 10" />
          <path d="M520 1060L440 1230 430 1320 350 1430M580 940l-55 110" fill="none" stroke="#b28ab0" stroke-width="5" stroke-dasharray="6 8" />
          <path d="M350 1440l60-30 80-20 5 50z" fill="#ebdbe8" /><path d="M400 1425l35-25 30 40h-70z" fill="#d9c5bf" />
          <path d="M20 1385L80 1440" stroke="#fff" stroke-width="26" />
          <g fill="none" stroke="#86ca92" stroke-width="2"><path v-for="(p, i) in tufts" :key="i" :d="`M${p[0] - 11} ${p[1] + 8}h22m-11 0v-16m-7 8l7 8 7-8`" /></g>
          <g fill="none" stroke="#7fae77" stroke-width="2"><path v-for="(p, i) in trees2" :key="i" :d="treeD(p)" /></g>
          <g font-family="Noto Sans" fill="#666" font-size="32" paint-order="stroke" stroke="#ffffffa0" stroke-width="4">
            <text x="40" y="1118" textLength="68">DHL</text><text x="16" y="1160" textLength="188">stikzentrum</text><text x="33" y="1202" textLength="106">Tchibo</text>
            <text x="18" y="655" font-style="italic" font-size="38" fill="#5d6048">en</text><text x="20" y="545" fill="#444">e</text><text x="20" y="597" fill="#444">-</text>
            <text x="358" y="1118" font-size="25" fill="#444" textLength="246" transform="rotate(37 360 1118)">Senator-Blase-Straße</text>
            <text x="40" y="1422" font-size="28" fill="#444" transform="rotate(35 40 1422)">Me</text>
            <text x="36" y="410" font-size="25" fill="#444" transform="rotate(-60 36 410)">Der Hamerweg</text>
          </g>
          <path d="M560 1050v34M560 1056l-20-8M560 1056l12-12M552 1084h16" stroke="#222" stroke-width="5" />
          <g fill="#ffff00" stroke="#33587c" stroke-width="3"><circle cx="531" cy="130" r="19" /><circle cx="327" cy="940" r="19" /><circle cx="432" cy="1015" r="19" /></g>
          <g font-family="Noto Sans" font-size="46" fill="#111" paint-order="stroke" stroke="#fff" stroke-width="10" stroke-linejoin="round">
            <text x="532" y="60">Do</text><text x="532" y="120">P29</text><text x="330" y="867">Upstream</text><text x="330" y="927">P27</text><text x="435" y="1004">Upstream</text><text x="435" y="1064">P28</text>
          </g>
        </g>
        <g transform="translate(560 900) scale(.43365 .33333)">
          <path d="M705 100H1050L1140 418H790z" fill="#b5e3b5" /><path d="M900 105l145-5 15 85-55 20-20-30-80 10-20-40zM1060 220l30 50-5-50zM915 375l150-28 10 28 45-5 20 50H920z" fill="#cdebb0" />
          <path d="M822 100h50v25l-40 10zM845 180l30-10-3 45-28-10zM848 243l52 0v22l-55 6z" fill="#aad3df" />
          <path d="M1050 100H1345L1440 418H1140z" fill="#ebdbe8" /><path d="M1340 100H1530V420H1440z" fill="#aad3df" />
          <path d="M705 100L790 418" stroke="#96d697" stroke-width="14" /><path d="M1048 100L1136 418" stroke="#87d67c" stroke-width="10" />
          <path d="M612 100l80 318M636 100l78 318" stroke="#a5cfe0" stroke-width="4" /><path d="M626 100L705 418M880 100L905 230V385M680 310L900 270" stroke="#e6ecc9" stroke-width="8" fill="none" /><path d="M626 100L678 310 705 418M880 100L905 230V385" stroke="#ae7e32" stroke-width="4.500" stroke-dasharray="18 8" fill="none" /><path d="M680 310L900 270" stroke="#ae7e32" stroke-width="4.500" stroke-dasharray="9 8" />
          <path d="M673 100L762 418" stroke="#bbb" stroke-width="24" /><path d="M673 100L762 418" stroke="#fff" stroke-width="21" />
          <g fill="none" stroke="#a6a6a6" stroke-dasharray="7 3"><path d="M1203 100L1225 240 1280 418" stroke-width="17" /><path d="M1348 100L1425 418" stroke-width="14" /></g>
          <path d="M1065 100L1160 418M1110 100L1155 265M1120 280L1215 235M1235 100L1320 418" stroke="#fff" stroke-width="4" fill="none" />
          <path d="M1262 100h62l24 108-52 26zM1150 315l78-32 28 100-70 36zM1335 390l60-22 10 50h-60zM1132 133l38-20-5 30-25 8zM1170 158l22-10 3 12-20 8z" fill="#d9d0c9" stroke="#c0aea4" stroke-width="2" />
          <g fill="none" stroke="#86ca92" stroke-width="2"><path v-for="(p, i) in tufts2" :key="i" :d="`M${p[0] - 9} ${p[1] + 6}h18m-9 0v-16m-5 8l5 8 5-8`" /></g>
          <text x="1408" y="115" font-family="Noto Sans" font-size="28" fill="#667" stroke="#fff8" stroke-width="4" paint-order="stroke">Hafen</text>
        </g>
        <text x="851" y="943" font-family="Noto Sans" font-size="9.600" fill="#333" textLength="90" transform="rotate(72 851 943)">Senator-Apelt-Straße</text>
        <g transform="translate(700 140) scale(.34435 .33333)">
          <path d="M0 38L230 105 315 125 330 145 480 165H1530L1320 138 760 36H0z" fill="#ebdbe8" /><path d="M1360 36H1515V78z" fill="#ebdbe8" />
          <path d="M430 40L760 105 1000 165" stroke="#b2b2b2" stroke-width="24" stroke-dasharray="24 2" fill="none" /><path d="M430 34L760 99 990 158M430 44L760 109 990 168" stroke="#dadada" stroke-width="2" fill="none" /><path d="M800 95l150 30 50 40" stroke="#b0b0b0" stroke-width="14" fill="none" />
          <path d="M720 62L1000 125Q1030 135 1050 165" stroke="#bbb" stroke-width="18" fill="none" /><path d="M720 62L1000 125Q1030 135 1050 165" stroke="#fff" stroke-width="14" fill="none" />
          <path d="M30 36L310 95 325 36M510 153l100 15" stroke="#f8f4f6" stroke-width="6" fill="none" />
          <path d="M190 36L320 62 313 85 185 52zM343 42L443 68 432 110 333 88zM270 98l24 6-10 34-20-6zM745 110L940 150V165H740l5-20-20-10zM1145 145l60 12v10h-60zM1490 36h25v20z" fill="#d9d0c9" stroke="#c0aea4" stroke-width="2" />
          <path d="M760 117L930 152" stroke="#aaa" stroke-width="5" stroke-dasharray="9 7" />
          <path d="M812 36l-6 30M998 80l-8 35M1137 106l-20 4 2 28" stroke="#f0eee6" stroke-width="9" fill="none" />
          <path d="M25 60h20M60 71h16M100 72h22M145 90h12M228 104h14" stroke="#4ea4f5" stroke-width="4" />
          <text x="560" y="36" font-family="Noto Sans" font-size="26" fill="#333" transform="rotate(11 560 36)" stroke="#fff9" stroke-width="4" paint-order="stroke">p-Plüm-Straße</text>
        </g>
      </svg>

      <section class="toolbox">
        <div class="tbh"><h4>Processing Toolbox</h4><span class="pb">❐</span><span class="pb">✖</span></div>
        <div class="ptools">
          <svg class="i20" viewBox="0 0 24 24" v-html="icons.models" /><svg class="i20" viewBox="0 0 24 24" v-html="icons.python" /><svg class="i20" viewBox="0 0 24 24" v-html="icons.clock" />
          <span class="pr"><svg class="i16" viewBox="0 0 24 24" v-html="icons.page" /></span><svg class="i20" viewBox="0 0 24 24" v-html="icons.wrench" />
        </div>
        <div class="psearch"><svg class="i14" viewBox="0 0 24 24" v-html="icons.mag" /><svg class="i14" viewBox="0 0 24 24" v-html="icons.clear" /></div>
        <div class="ptree" />
        <div class="tabs"><span class="prv">Processing results viewer</span><span class="dp">DataPlotly</span><span class="act ptb">Processing Toolbox</span></div>
      </section>
    </main>

    <footer class="status">
      <div class="loc"><svg class="i14" viewBox="0 0 24 24" v-html="icons.mag" /><span>Type to locate (Ctr...</span><svg class="i14 pale" viewBox="0 0 24 24" v-html="icons.clear" /></div>
      <span class="msg">9 feature(s) selected on layer apoints.</span>
      <span class="lab l1">Coordinate</span><span class="inp coord">3480434,5887480</span><svg class="i24m" viewBox="0 0 24 24" v-html="icons.mouse" />
      <span class="lab l2">Scale</span><span class="combo"><em>1:10.387</em><i>▼</i></span><svg class="lk" viewBox="0 0 24 24" v-html="icons.lockg" />
      <span class="lab l3">Magnifier</span><span class="spin s1"><em>100</em><svg class="i14 pale" viewBox="0 0 24 24" v-html="icons.clear" /><span class="ud"><i>▲</i><i>▼</i></span></span>
      <span class="lab l4">Rotation</span><span class="spin s2"><em>0,0</em><svg class="i14 pale" viewBox="0 0 24 24" v-html="icons.clear" /><span class="ud"><i>▲</i><i>▼</i></span></span>
      <span class="ck c rc" /><span class="lab l5">Render</span>
      <svg class="i24m wi" viewBox="0 0 24 24" v-html="icons.wire" /><span class="lab l6">EPSG:31467</span><svg class="i24m bub" viewBox="0 0 24 24" v-html="icons.bubble" />
    </footer>

    <div class="dlg">
      <div class="dt"><b>Options | Processing</b><span>×</span></div>
      <div class="db">
        <div class="ds">
          <div class="dsi"><svg class="i14" viewBox="0 0 24 24" v-html="icons.clear" /></div>
          <div class="dl">
            <div v-for="s in side" :key="s[1]" class="di" :class="s[0]"><svg class="i18" viewBox="0 0 24 24" v-html="icons[s[0]]" /><span>{{ s[1] }}</span></div>
            <div class="di cur"><svg class="i18" viewBox="0 0 24 24" v-html="icons.gearg" /><span>Processing</span></div>
          </div>
        </div>
        <div class="split"><i /></div>
        <div class="dr">
          <div class="search"><span>Search...</span><svg class="i14" viewBox="0 0 24 24" v-html="icons.clear" /></div>
          <div class="tree">
            <div class="th"><span>Setting</span><span>Value</span></div>
            <div v-for="r in rows" :key="r.n" class="tr">
              <div class="tc" :class="'lv' + r.l"><i class="tw" :class="r.x" /><svg class="i16" viewBox="0 0 24 24" v-html="icons[r.i]" /><span class="nm" :class="r.i">{{ r.n }}</span></div>
              <span v-if="r.v === 'btn'" class="btn reset">Reset to defaults</span><span v-if="r.v === 'chk'" class="ck c vc" />
            </div>
          </div>
          <div class="bb"><span class="btn">Help</span><span class="btn can">Cancel</span><span class="btn ok">OK</span></div>
        </div>
      </div>
      <div class="mark m1" /><div class="mark m2" />
    </div>

    <div class="menu">
      <template v-for="(m, i) in menu" :key="i">
        <hr v-if="m.sep">
        <div v-else class="mi" :class="{ on: m.on }"><span class="mic"><svg v-if="m.i" class="i16" viewBox="0 0 24 24" v-html="icons[m.i]" /></span><span class="nm"><u>{{ m.a }}</u>{{ m.b }}</span><i v-if="m.sub">▶</i></div>
      </template>
    </div>
    <svg class="ptr" viewBox="0 0 14 22"><path d="M1 1v16l3.800-3.500L7.500 20l3-1.300L7.800 12.500H13z" fill="#fff" stroke="#111" stroke-width="1.300" /></svg>
  </div>
</template>

<style>
body { margin: 0; overflow: hidden; }
</style>
<style scoped>
* { box-sizing: border-box; }
i, em { font-style: normal; }
.win { position: relative; width: 1920px; height: 1080px; overflow: hidden; background: #d6d6d6; color: #222; font: 12.8px/18px "Noto Sans", sans-serif; letter-spacing: -.37px; display: flex; flex-direction: column; border-bottom: 1px solid #999; }
svg { flex: none; display: block; letter-spacing: 0; }
.title { height: 28px; flex: none; background: linear-gradient(#e8e8e8, #d6d6d6); display: flex; align-items: center; justify-content: center; position: relative; color: #686868; text-shadow: 0 1px #fff; }
.title b { font-size: 12.8px; letter-spacing: -.05px; }
.wb { position: absolute; right: 11px; top: 5px; display: flex; gap: 11px; font-weight: 700; font-size: 17px; color: #8b8b8b; }
.wb i { width: 13px; text-align: center; }
.menubar { height: 22px; flex: none; display: flex; padding-left: 13px; }
.menubar span { line-height: 20px; height: 22px; flex: none; }
.menubar span.on { background: linear-gradient(#9aba7a, #8aab68); border: 1px solid #7c9a5c; border-bottom: 0; border-radius: 3px 3px 0 0; color: #f2f2f2; padding-left: 4px; margin: -1px 13px 0 -1px; height: 23px; }
u { text-underline-offset: 3px; text-decoration-thickness: 1px; }
.tb { flex: none; display: flex; align-items: center; background: linear-gradient(#d6d6d6, #bfbfbf); border-bottom: 1px solid #959595; }
.tb1 { height: 34px; padding-top: 2px; } .tb2 { height: 35px; } .tb3 { height: 32px; }
.cell { flex: none; height: 100%; display: flex; align-items: center; justify-content: center; }
.i24 { width: 18px; height: 18px; }
.handle { height: 24px; width: 24px; }
.down, .downb { width: 20px; height: 20px; }
.dim { opacity: .7; }
.c-gear, .c-pan { box-shadow: inset 0 0 0 1px #777; background: #aeaeae; border-radius: 3px; height: 26px; outline: 1px solid #8a8a8a; }
.i14 { width: 14px; height: 14px; } .i16 { width: 16px; height: 16px; } .i18 { width: 18px; height: 18px; } .i20 { width: 20px; height: 20px; }
.pale { opacity: .6; }
.nm { padding-bottom: 2px; }
.spin { display: flex; align-items: center; height: 24px; border: 1px solid #949494; border-radius: 3px; background: #f3f3f3; padding-left: 4px; flex: none; }
.spin em { flex: 1; }
.spin svg { margin-right: 10px; }
.spin.dis { width: 96px; background: #d2d2d2; color: #808080; border-color: #a5a5a5; }
.ud { width: 12px; height: 22px; background: #dcdcdc; border-left: 1px solid #b0b0b0; display: flex; flex-direction: column; justify-content: space-around; font-size: 5px; line-height: 8px; text-align: center; color: #555; }
.unit { width: 69px; height: 28px; border: 1px solid #a2a2a2; border-radius: 3px; background: linear-gradient(#d8d8d8, #c8c8c8); display: flex; align-items: center; justify-content: space-between; padding: 0 4px 0 6px; color: #858585; }
.unit i { font-size: 9px; }
.main { height: 889px; flex: none; display: flex; }
.strip { width: 32px; display: flex; flex-direction: column; align-items: center; gap: 10.500px; padding: 4px 0 0 1px; position: relative; }
.dotline { width: 25px; height: 2px; background: repeating-linear-gradient(90deg, #999 0 2px, transparent 2px 5px); margin-bottom: -.5px; }
.grip { position: absolute; left: 0; top: 589px; width: 2px; height: 29px; background: #777; }
h4 { margin: 0; font-weight: 400; font-size: 12.8px; }
.layers { width: 338px; display: flex; flex-direction: column; margin-right: 6px; }
.layers h4 { height: 29px; padding: 3px 0 0 2px; }
.ltools { height: 28px; display: flex; padding: 4px 0 0 7px; gap: 12px; }
.da { width: 16px; height: 16px; margin: 3px -4px 0 -15px; }
.fn { margin-left: -4px; }
.ltools .da:last-child { margin: 0 0 0 -5px; }
.eye { width: 18px; }
.ltree { height: 802px; border: 1px solid #8d8d8d; border-bottom-width: 2px; background: #f3f3f3; }
.lr { height: 22px; display: flex; align-items: center; padding-left: 8px; color: #000; font-weight: 700; }
.lr .nm { padding-bottom: 0; }
.lr .i16 { margin: 0 6px 0 9px; }
.lr.g { color: #bcbcbc; }
.lr.sub { padding-left: 28px; font-weight: 400; color: #222; }
.lr.sub .i16 { width: 15px; height: 15px; margin: 0 8px 0 12px; }
.tw { width: 18px; flex: none; display: flex; }
.tw.r::before { content: ""; border: 5px solid transparent; border-left: 6px solid #111; border-right: 0; margin-left: 2px; }
.tw.d::before { content: ""; border: 5.500px solid transparent; border-top: 6px solid #111; border-bottom: 0; margin-left: -1px; }
.ck { width: 14px; height: 14px; border: 1px solid #999; border-radius: 3px; background: #f5f5f5; flex: none; }
.ck.c { border-color: #555f4c; background: #a9c98a; display: flex; justify-content: center; align-items: center; }
.ck.c::before { content: ""; width: 8px; height: 8px; border: 1px solid #6d8458; background: linear-gradient(45deg, transparent 40%, #4c5f3c 40% 60%, transparent 60%), linear-gradient(-45deg, #fff 40%, #4c5f3c 40% 60%, #fff 60%); }
.tabs { display: flex; align-items: flex-start; padding-left: 1px; }
.tabs span { height: 26px; border: 1px solid #949494; border-top: 0; border-radius: 0 0 3px 3px; background: linear-gradient(#c8c8c8, #dcdcdc 8px); text-align: center; line-height: 28px; box-shadow: 0 1px #bbb; white-space: nowrap; }
.tabs .act { height: 28px; background: #ececec; width: 84px; line-height: 31px; }
.tabs .bp { width: 96px; margin-left: 1px; }
.tabs .prv { width: 158px; } .tabs .dp { width: 74px; } .tabs .ptb { width: 123px; margin-left: 1px; }
.map { width: 846px; height: 889px; outline: 1px solid #888; outline-offset: -1px; }
.toolbox { width: 692px; margin-left: 6px; display: flex; flex-direction: column; }
.tbh { display: flex; height: 26px; padding: 3px 2px 0 2px; gap: 4px; }
.tbh h4 { flex: 1; }
.pb { width: 12px; height: 12px; border: 1px solid #666; border-radius: 2px; font-size: 9px; line-height: 10px; text-align: center; margin: 3px 0 0 1px; letter-spacing: 0; }
.ptools { display: flex; height: 31px; padding: 3px 0 0 8px; gap: 13.500px; }
.ptools .i20 { margin-top: 3px; }
.pr { width: 26px; height: 26px; border: 1px solid #777; border-radius: 3px; background: #b4b4b4; display: flex; align-items: center; justify-content: center; margin: 0 -8px 0 -9.500px; }
.psearch { height: 26px; border: 1px solid #8d8d8d; border-width: 1px 1px 2px; border-radius: 3px; background: #f3f3f3; display: flex; justify-content: flex-end; align-items: center; gap: 12px; padding-right: 7px; margin-top: 1px; }
.ptree { height: 775px; border: 1px solid #8d8d8d; border-bottom-width: 2px; background: #f3f3f3; }
.status { display: flex; height: 39px; align-items: center; padding: 0 0 0 5px; flex: none; white-space: nowrap; }
.status > * { flex: none; }
.loc { width: 198px; height: 25px; border: 1px solid #909090; border-radius: 3px; background: #f3f3f3; display: flex; align-items: center; padding: 0 7px; color: #9a9a9a; letter-spacing: -.2px; }
.loc span { flex: 1; margin-left: 8px; }
.msg { width: 777px; padding-left: 10px; color: #111; }
.l1 { width: 77px; padding-left: 10px; } .l2 { width: 43px; padding-left: 10px; } .l3 { width: 69px; padding-left: 10px; } .l4 { width: 68px; padding-left: 10px; } .l5 { width: 60px; padding-left: 8px; } .l6 { width: 77px; padding-left: 5px; }
.inp, .combo { border: 1px solid #909090; border-radius: 3px; background: #f3f3f3; height: 25px; line-height: 22px; }
.coord { width: 110px; padding-left: 4px; }
.i24m { width: 24px; height: 24px; margin: 0 3px; }
.combo { width: 105px; height: 31px; display: flex; align-items: center; padding-left: 5px; }
.combo em { flex: 1; }
.combo i { width: 22px; height: 29px; border-left: 1px solid #999; font-size: 9px; line-height: 29px; text-align: center; background: linear-gradient(#f4f4f4, #d8d8d8); }
.lk { width: 22px; height: 22px; margin: 0 3px 0 5px; }
.s1 { width: 91px; } .s2 { width: 87px; }
.rc { margin-left: 10px; }
.wi { width: 22px; margin: 0 2px 0 3px; }
.bub { margin: 0 0 0 8px; }
.dlg { position: absolute; left: 566px; top: 194px; width: 1031px; height: 740px; border: 1px solid #8a8a8a; border-radius: 5px 5px 0 0; background: #d6d6d6; display: flex; flex-direction: column; }
.dt { height: 25px; background: linear-gradient(#fff, #e4e4e4 2px, #d6d6d6); border-radius: 4px 4px 0 0; display: flex; align-items: center; justify-content: center; position: relative; color: #686868; text-shadow: 0 1px #fff; }
.dt b { letter-spacing: 0; padding-top: 1px; }
.dt span { position: absolute; right: 12px; font-weight: 700; font-size: 17px; color: #888; }
.db { display: flex; flex: 1; }
.ds { width: 150px; background: #595959; display: flex; flex-direction: column; }
.dsi { height: 26px; margin: 0 1px; background: #f3f3f3; border: 1px solid #999; border-radius: 3px; display: flex; align-items: center; justify-content: flex-end; padding: 0 7px 2px 0; }
.dl { padding-top: 6px; }
.di { height: 28px; display: flex; align-items: center; gap: 6px; padding-left: 4px; color: #f5f5f5; }
.di .i18 { width: 19px; height: 19px; }
.di.gdalg { gap: 4px; }
.di.warn { height: 24px; }
.di.cur { background: #d6d6d6; color: #111; height: 29px; margin: 1px 2px 0; padding-left: 4px; }
.di.cur .i18 { margin-left: 1px; }
.split { width: 7px; display: flex; align-items: center; justify-content: center; }
.split i { width: 2px; height: 26px; background: repeating-linear-gradient(#909090 0 2px, transparent 2px 5.500px); }
.dr { flex: 1; display: flex; flex-direction: column; padding: 2px 3px 0 0; }
.search { height: 26px; border: 1px solid #8d8d8d; border-radius: 3px; background: #f3f3f3; display: flex; align-items: center; justify-content: space-between; padding: 0 6px 0 3px; color: #8e8e8e; margin: 0 1px 7px 0; }
.tree { height: 643px; border: 1px solid #8d8d8d; background: #f3f3f3; margin-left: -1px; }
.th { height: 25px; background: linear-gradient(#f7f7f7, #dcdcdc); border-bottom: 1px solid #999; display: flex; line-height: 25px; }
.th span { width: 181px; padding-left: 4px; border-right: 1px solid #999; }
.th span:last-child { border: 0; }
.tr { height: 27px; display: flex; align-items: center; }
.tr:nth-child(odd) { background: #e2e2e2; }
.tc { width: 181px; display: flex; align-items: center; padding-left: 8px; white-space: nowrap; }
.tc.lv1 { padding-left: 28px; } .tc.lv2 { padding-left: 48px; }
.tc .tw { width: 15px; }
.tc .i16 { margin-right: 6px; }
.tc span.gdal, .tc span.grass { margin-left: -2px; }
.btn { height: 25px; width: 83px; border: 1px solid #999; border-radius: 3px; background: linear-gradient(#f6f6f6, #dadada); text-align: center; line-height: 23px; box-shadow: 0 1px 1px #0002; }
.reset { width: 109px; margin-left: 1px; }
.vc { margin-left: 6px; }
.bb { display: flex; padding-top: 6px; }
.can { margin-left: auto; margin-right: 8px; }
.ok { margin-right: 1px; border-color: #93ab80; }
.mark { position: absolute; border: 5px solid #fb0000; }
.m1 { left: -3px; top: 496px; width: 155px; height: 42px; }
.m2 { left: 155px; top: 164px; width: 237px; height: 90px; }
.menu { position: absolute; left: 201px; top: 50px; width: 241px; height: 165px; background: #f7f7f7; border: 1px solid #8c8c8c; box-shadow: 2px 3px 6px #0006; }
.mi { height: 25px; display: flex; align-items: center; padding-left: 3px; position: relative; }
.mic { width: 22px; padding-bottom: 1px; }
.mi i { position: absolute; right: 4px; font-size: 8px; color: #555; top: 2px; }
.mi:first-child { height: 24px; }
.mi.on { background: linear-gradient(#9fbe80, #8aab68); color: #f2f2f2; border: 1px solid #6f8b52; margin: 0 -1px; height: 26px; }
hr { margin: 3px 0; border: 0; border-top: 1px solid #ccc; height: 0; }
.ptr { position: absolute; left: 375px; top: 198px; width: 14px; height: 22px; }
</style>
